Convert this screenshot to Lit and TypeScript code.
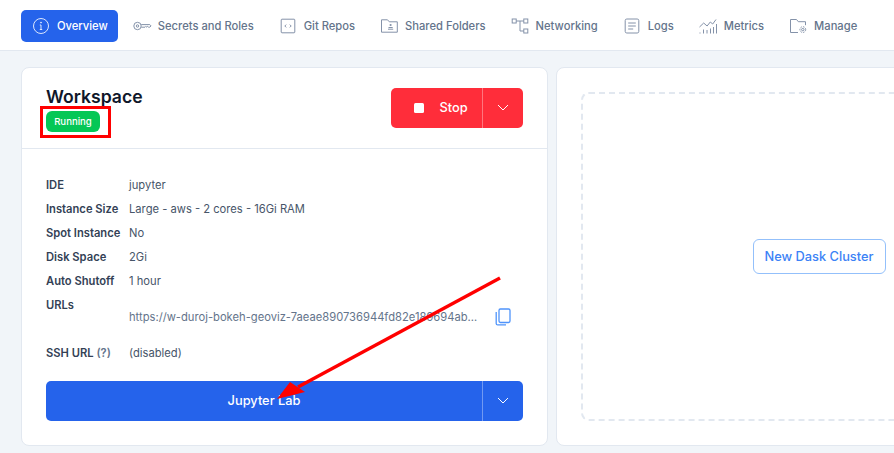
import { LitElement, html, css, svg } from "lit";
import { customElement } from "lit/decorators.js";

const s = (inner: unknown, w = 20, h = 20, vb = "0 0 20 20") =>
  html`<svg class="ico" width=${w} height=${h} viewBox=${vb} fill="none" stroke="currentColor" stroke-width="1">${inner}</svg>`;

const icons = {
  info: s(svg`<circle cx="10" cy="10" r="7.5"/><path d="M10 9v4.5M8.8 13.5h2.4M8.8 9H10"/><circle cx="10" cy="6.6" r=".5" fill="currentColor"/>`),
  key: s(svg`<circle cx="5.5" cy="10" r="3.7"/><circle cx="5.5" cy="10" r="1.2"/><path d="M9.2 8.6h8.6l1.2 1.3-1.2 1.3h-1.2l-.9-.9-.9.9-.9-.9-.9.9H9.2"/>`),
  code: s(svg`<rect x="3.2" y="3.2" width="13.6" height="13.6" rx=".8"/><path d="M8.2 8.6 6.8 10l1.4 1.4M11.8 8.6l1.4 1.4-1.4 1.4"/>`),
  folder: s(svg`<path d="M2.5 3.8h6l1.8 2h8v10.4H2.5z" stroke-linejoin="round"/><circle cx="11.6" cy="9" r="1.1" fill="currentColor" stroke="none"/><path d="M9 13.2h5.2M9.5 11.5h4.2"/>`),
  net: s(svg`<rect x="2.2" y="3" width="4" height="4"/><rect x="13.8" y="3" width="4" height="4"/><rect x="13.8" y="13" width="4" height="4"/><path d="M6.2 5h7.6M10 5v10h3.8"/>`),
  logs: s(svg`<rect x="3.2" y="3" width="13.6" height="14" rx="1.6"/><path d="M6.2 7h7.6M6.2 10h7.6M6.2 13h5"/>`),
  metrics: s(svg`<path d="m1.5 11 4.2-4 3.4 3 3.2-4 2.4 2 3.3-4.5"/><path d="M2 17.5v-1M5.5 17.5v-4M9 17.5v-3.5M12.5 17.5v-5M15.5 17.5v-6.5M18.5 17.5V8"/>`),
  manage: s(svg`<path d="M10 16.5H2.5V3.5h6l1.8 2.2h7.2v3.5" stroke-linejoin="round"/><circle cx="14.8" cy="13.6" r="1.2"/><circle cx="14.8" cy="13.6" r="2.9" stroke-dasharray="1.6 1.1"/>`),
  chevron: html`<svg class="chev" width="12" height="7" viewBox="0 0 12 7" fill="none" stroke="currentColor" stroke-width="1"><path d="m1 1 5 5 5-5"/></svg>`,
  copy: html`<svg width="16" height="18" viewBox="0 0 16 18" fill="none" stroke="currentColor" stroke-width="1.3"><rect x="4" y="1" width="11" height="13.5" rx="1.4"/><path d="M1.2 4v11.4c0 .9.6 1.5 1.5 1.5H11"/></svg>`,
};

const tabs = [
  ["Overview", icons.info],
  ["Secrets and Roles", icons.key],
  ["Git Repos", icons.code],
  ["Shared Folders", icons.folder],
  ["Networking", icons.net],
  ["Logs", icons.logs],
  ["Metrics", icons.metrics],
  ["Manage", icons.manage],
] as const;

const rows = [
  ["IDE", "jupyter"],
  ["Instance Size", "Large - aws - 2 cores - 16Gi RAM"],
  ["Spot Instance", "No"],
  ["Disk Space", "2Gi"],
  ["Auto Shutoff", "1 hour"],
];

@customElement("app-root")
export class AppRoot extends LitElement {
  static styles = css`
    :host {
      display: block;
      position: relative;
      width: 894px;
      height: 453px;
      overflow: hidden;
      background: #f1f5f9;
      font-family: Inter, "Liberation Sans", sans-serif;
      color: #475569;
    }
    nav {
      display: flex;
      align-items: center;
      height: 48px;
      padding: 2px 0 0 21px;
      gap: 18px;
      background: #fff;
      border-bottom: 1px solid #e2e8f0;
    }
    .tab {
      display: flex;
      align-items: center;
      gap: 6px;
      height: 32px;
      padding: 0 3px;
      font-size: 11.2px;
      font-weight: 500;
      color: #64748b;
      white-space: nowrap;
    }
    .tab .ico { color: #8492a9; flex: none; }
    .tab.active {
      background: #2563eb;
      color: #fff;
      border-radius: 5px;
      padding: 0 10px;
      margin-right: -7px;
    }
    .tab.active .ico { color: #dbe6fd; }
    main {
      display: grid;
      grid-template-columns: 527px 526px;
      gap: 8px;
      padding: 16px 0 0 21px;
      width: max-content;
    }
    .card {
      height: 379px;
      box-sizing: border-box;
      background: #fff;
      border: 1px solid #e2e8f0;
      border-radius: 8px;
    }
    .head {
      display: flex;
      justify-content: space-between;
      height: 81px;
      box-sizing: border-box;
      padding: 19px 24px 0;
      border-bottom: 1px solid #e2e8f0;
    }
    h1 {
      margin: 0;
      font-size: 17.6px;
      line-height: 20px;
      font-weight: 600;
      color: #0f172a;
    }
    .badge-wrap {
      position: relative;
      margin-top: 4px;
      width: 54px;
    }
    .badge {
      height: 21px;
      display: flex;
      align-items: center;
      justify-content: center;
      background: #05c756;
      color: #fff;
      border-radius: 6px;
      font-size: 9.6px;
      font-weight: 500;
    }
    .mark {
      position: absolute;
      left: -6px;
      top: -5px;
      width: 71px;
      height: 32px;
      box-sizing: border-box;
      border: 3px solid #ff0000;
    }
    .split {
      display: flex;
      height: 40px;
      color: #fff;
      border-radius: 5px;
      font-size: 12.8px;
      font-weight: 500;
    }
    .split .main {
      display: flex;
      align-items: center;
      justify-content: center;
      flex: 1;
    }
    .split .main span { padding-bottom: 2px; }
    .split .drop {
      display: flex;
      align-items: center;
      justify-content: center;
      width: 41px;
      padding-bottom: 1px;
      box-sizing: border-box;
      border-left: 1px solid rgba(255, 255, 255, 0.35);
    }
    .stop {
      width: 132px;
      margin-top: 1px;
      background: #ff2d3a;
    }
    .stop .main { gap: 15px; padding-left: 9px; }
    .sq {
      width: 10px;
      height: 10px;
      background: #fff;
      border-radius: 1.5px;
    }
    .body { padding: 24px 24px 0; }
    .grid {
      display: grid;
      grid-template-columns: 83px 1fr;
      grid-auto-rows: 24px;
      font-size: 11.2px;
      align-items: center;
    }
    .grid b { font-weight: 600; color: #334155; }
    .grid span { color: #475569; }
    .urlrow {
      display: grid;
      grid-template-columns: 83px 1fr;
      font-size: 11.2px;
      height: 48px;
    }
    .urlrow b { font-weight: 600; color: #334155; line-height: 24px; }
    .url {
      display: flex;
      align-items: center;
      gap: 14px;
      margin-top: 12px;
      height: 24px;
    }
    .url a {
      width: 352px;
      white-space: nowrap;
      color: #64748b;
      font-size: 11.2px;
    }
    .url svg { color: #4f94fb; flex: none; }
    .grid .hint { color: #64748b; }
    .jup {
      background: #2563eb;
      margin-top: 16px;
    }
    .right { padding: 24px; }
    .dash {
      height: 329px;
      box-sizing: border-box;
      border: 2px dashed #e2e8f0;
      border-radius: 8px;
      display: flex;
      align-items: center;
      justify-content: center;
    }
    .new {
      height: 35px;
      width: 133px;
      box-sizing: border-box;
      display: flex;
      align-items: center;
      justify-content: center;
      background: #fff;
      border: 1px solid #93c0fb;
      border-radius: 6px;
      color: #3b82f6;
      font-size: 12.8px;
      font-weight: 500;
      white-space: nowrap;
    }
    .arrow {
      position: absolute;
      left: 0;
      top: 0;
      pointer-events: none;
    }
  `;

  render() {
    return html`
      <nav>
        ${tabs.map(
          ([label, icon], i) =>
            html`<div class="tab ${i === 0 ? "active" : ""}">${icon}<span>${label}</span></div>`
        )}
      </nav>
      <main>
        <section class="card">
          <div class="head">
            <div>
              <h1>Workspace</h1>
              <div class="badge-wrap">
                <div class="badge">Running</div>
                <div class="mark"></div>
              </div>
            </div>
            <div class="split stop">
              <div class="main"><i class="sq"></i><span>Stop</span></div>
              <div class="drop">${icons.chevron}</div>
            </div>
          </div>
          <div class="body">
            <div class="grid">
              ${rows.map(([k, v]) => html`<b>${k}</b><span>${v}</span>`)}
            </div>
            <div class="urlrow">
              <b>URLs</b>
              <div class="url">
                <a>https://w-duroj-bokeh-geoviz-7aeae890736944fd82e189694ab…</a>
                ${icons.copy}
              </div>
            </div>
            <div class="grid">
              <b>SSH URL <span class="hint">(?)</span></b><span>(disabled)</span>
            </div>
            <div class="split jup">
              <div class="main"><span>Jupyter Lab</span></div>
              <div class="drop">${icons.chevron}</div>
            </div>
          </div>
        </section>
        <section class="card right">
          <div class="dash"><div class="new">New Dask Cluster</div></div>
        </section>
      </main>
      <svg class="arrow" width="894" height="453" viewBox="0 0 894 453">
        <path d="M500 278 298 387" stroke="#ff0000" stroke-width="3.4" fill="none"/>
        <path d="M277 399 290 382 305 392Z" fill="#ff0000"/>
      </svg>
    `;
  }
}
